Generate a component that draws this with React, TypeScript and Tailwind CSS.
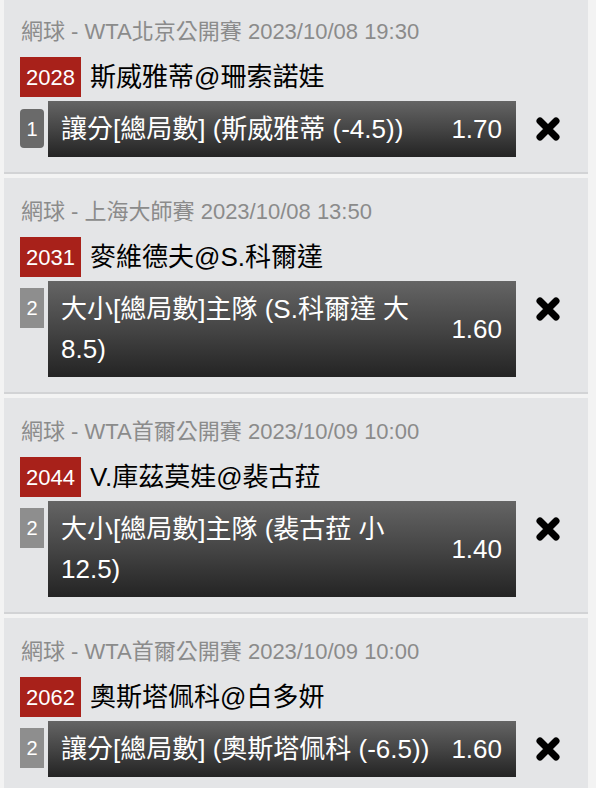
import React from 'react';

const bets = [
  {
    league: "網球 - WTA北京公開賽 2023/10/08 19:30",
    code: "2028",
    match: "斯威雅蒂@珊索諾娃",
    no: "1",
    pick: "讓分[總局數] (斯威雅蒂 (-4.5))",
    odds: "1.70",
    active: true,
  },
  {
    league: "網球 - 上海大師賽 2023/10/08 13:50",
    code: "2031",
    match: "麥維德夫@S.科爾達",
    no: "2",
    pick: "大小[總局數]主隊 (S.科爾達 大 8.5)",
    odds: "1.60",
  },
  {
    league: "網球 - WTA首爾公開賽 2023/10/09 10:00",
    code: "2044",
    match: "V.庫茲莫娃@裴古菈",
    no: "2",
    pick: "大小[總局數]主隊 (裴古菈 小 12.5)",
    odds: "1.40",
  },
  {
    league: "網球 - WTA首爾公開賽 2023/10/09 10:00",
    code: "2062",
    match: "奧斯塔佩科@白多妍",
    no: "2",
    pick: "讓分[總局數] (奧斯塔佩科 (-6.5))",
    odds: "1.60",
  },
];

const CloseIcon = () => (
  <svg width="28" height="28" viewBox="0 0 28 28">
    <path d="M6 6 L22 22 M22 6 L6 22" stroke="#000" strokeWidth="7" strokeLinecap="round" />
  </svg>
);

export default function App() {
  return (
    <div
      className="min-h-[788px] bg-[#f3f3f3] pl-[4px] pr-[8px] -mt-[2px] overflow-hidden"
      style={{ fontFamily: '"Liberation Sans", Arial, "Noto Sans CJK TC", sans-serif' }}
    >
      {bets.map((bet, i) => (
        <div key={i} className="bg-[#e4e5e7] border-b-2 border-[#d2d3d5] mb-[4px] pl-[16px] pt-[20px] pb-[15px]">
          {/* league + time */}
          <div className="text-[22px] leading-[28px] text-[#8b8b8b] pl-[1px] whitespace-nowrap">{bet.league}</div>

          {/* match */}
          <div className="flex items-center mt-[11px] h-[40px]">
            <span className="bg-[#a8211a] text-white text-[22px] h-[40px] w-[61px] flex items-center justify-center">
              {bet.code}
            </span>
            <span className="ml-[9px] text-[26px] text-black whitespace-nowrap">{bet.match}</span>
          </div>

          {/* selection */}
          <div className="flex items-start mt-[4px]">
            <span
              className={
                bet.active
                  ? "mt-[8px] w-[24px] h-[39px] rounded-[4px] bg-[#6a6a6a] text-white text-[20px] flex items-center justify-center"
                  : "mt-[7px] w-[24px] h-[40px] bg-[#8e8e8e] text-white text-[20px] flex items-center justify-center"
              }
            >
              {bet.no}
            </span>
            <div className="ml-[4px] w-[468px] flex items-center bg-linear-to-b from-[#656565] via-[#454545] to-[#242424] py-[8px] pl-[13px] pr-[14px] text-white">
              <div className="flex-1 text-[26px] leading-[40px] pr-[6px]">{bet.pick}</div>
              <div className="text-[26px] leading-[40px] whitespace-nowrap">{bet.odds}</div>
            </div>
            <div className="ml-[18px] mt-[14px]">
              <CloseIcon />
            </div>
          </div>
        </div>
      ))}
    </div>
  );
}
